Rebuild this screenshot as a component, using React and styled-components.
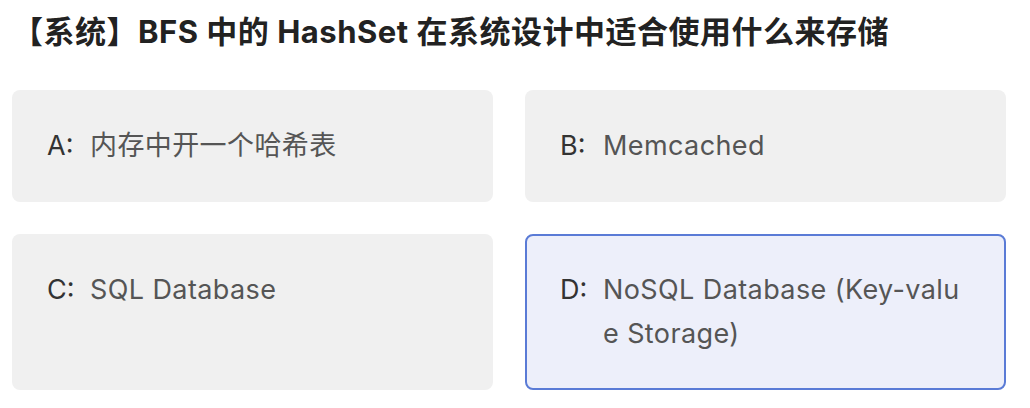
import React from "react";
import styled, { createGlobalStyle } from "styled-components";

const GlobalStyle = createGlobalStyle`
  html, body {
    margin: 0;
    padding: 0;
    background: #ffffff;
  }
  body {
    font-family: Inter, "Noto Sans CJK SC", sans-serif;
    -webkit-font-smoothing: antialiased;
  }
`;

const options = [
  { key: "A", text: "内存中开一个哈希表" },
  { key: "B", text: "Memcached" },
  { key: "C", text: "SQL Database" },
  { key: "D", text: "NoSQL Database (Key-value Storage)", selected: true },
];

const App = () => {
  return (
    <Page>
      <GlobalStyle />
      <Title>【系统】BFS 中的 HashSet 在系统设计中适合使用什么来存储</Title>
      <OptionGrid>
        {options.map((o) => (
          <Option key={o.key} $selected={o.selected}>
            <Label>{o.key}:</Label>
            <OptionText>{o.text}</OptionText>
          </Option>
        ))}
      </OptionGrid>
    </Page>
  );
};
export default App;

const Page = styled.div`
  padding: 14px 25px 0 12px;
`;

const Title = styled.h1`
  margin: 0 0 40px;
  font-size: 31px;
  line-height: 36px;
  font-weight: 700;
  color: #222222;
  letter-spacing: 0.5px;
`;

const OptionGrid = styled.div`
  display: grid;
  grid-template-columns: 481px 481px;
  column-gap: 32px;
  row-gap: 32px;
`;

const Option = styled.div`
  display: flex;
  align-items: flex-start;
  box-sizing: border-box;
  padding: 32px 32px 32px 33px;
  border-radius: 8px;
  border: 2px solid ${(p) => (p.$selected ? "#5a7bd6" : "transparent")};
  background: ${(p) => (p.$selected ? "#edeffa" : "#f0f0f0")};
  font-size: 27px;
  line-height: 44px;
  cursor: pointer;
`;

const Label = styled.span`
  flex: 0 0 43px;
  color: #333333;
`;

const OptionText = styled.span`
  flex: 1;
  color: #555555;
  word-break: break-all;
  letter-spacing: 0.4px;
`;
